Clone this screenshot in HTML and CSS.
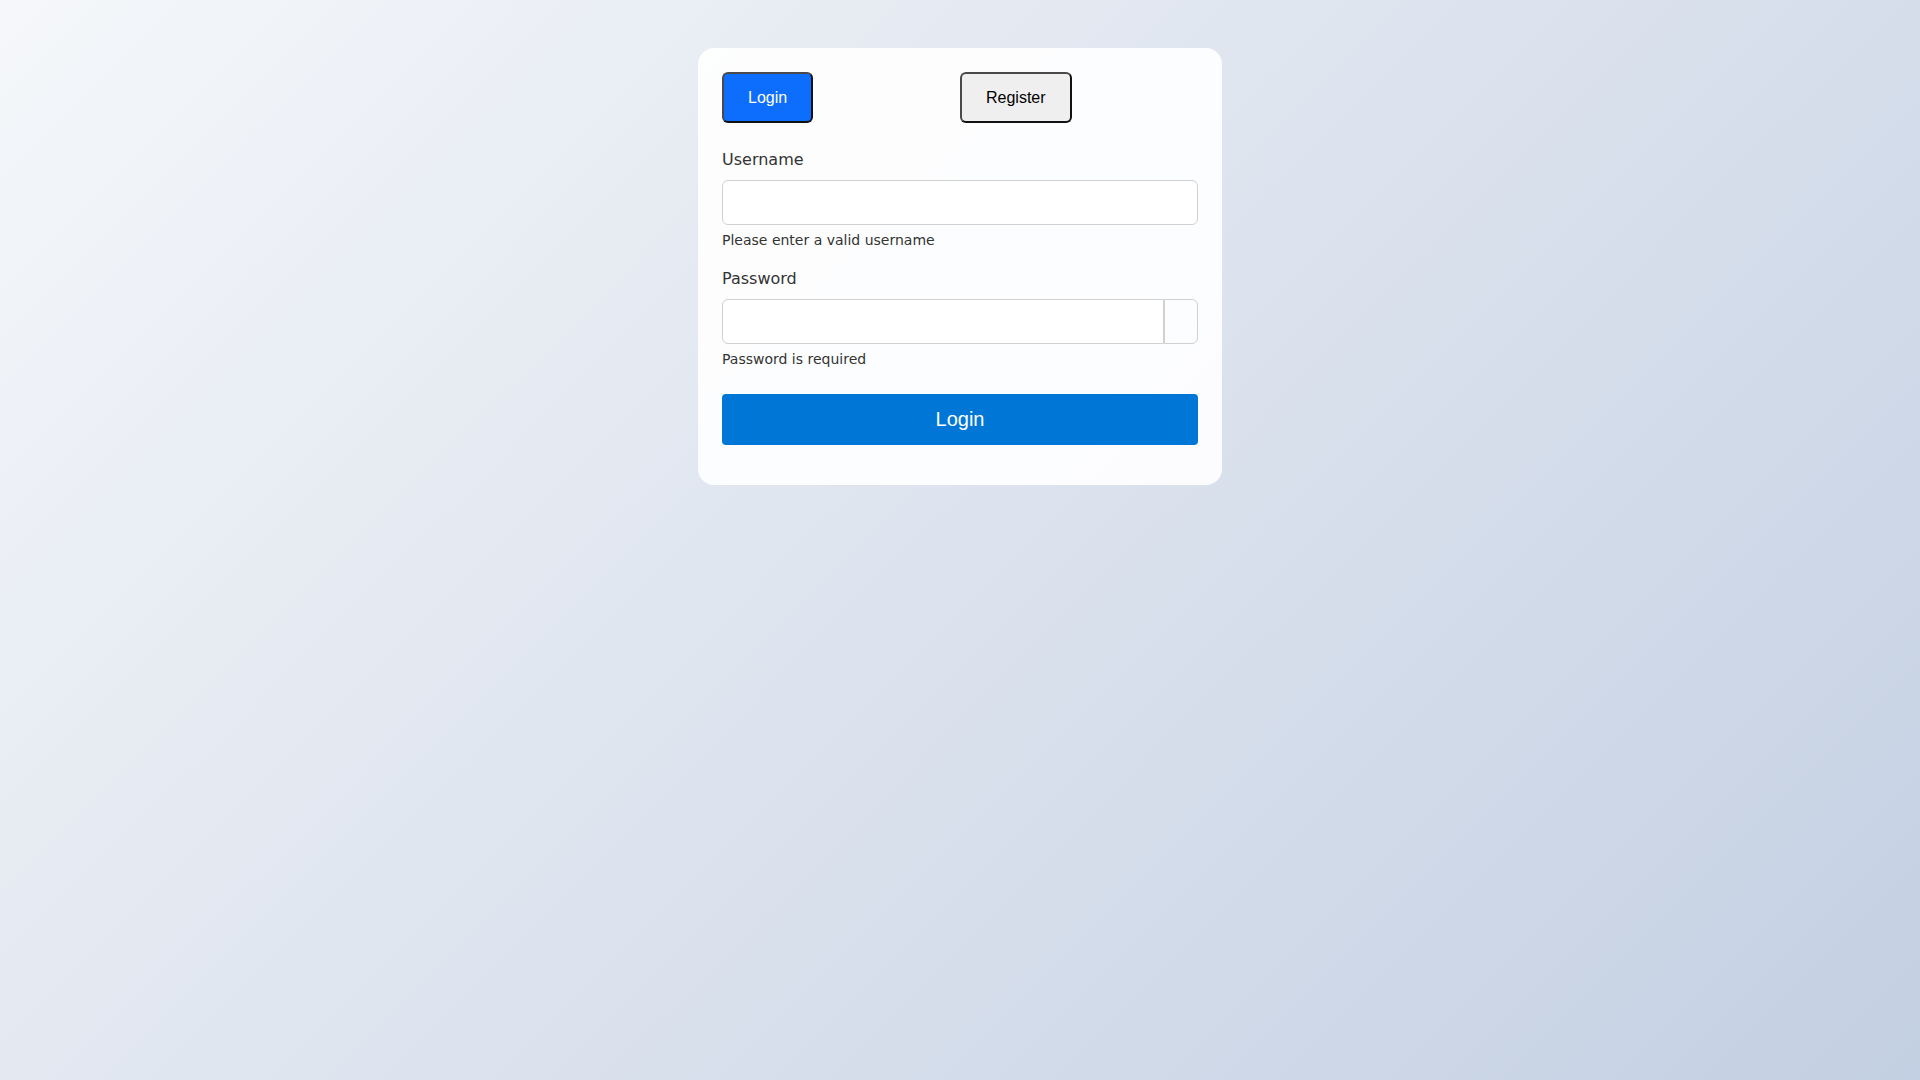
FILE: index.html
```html
<!DOCTYPE html>
<html lang="en">
<head>
  <meta charset="UTF-8" />
  <meta name="viewport" content="width=device-width, initial-scale=1.0" />
  <title>Login</title>
  <link rel="stylesheet" href="styles.css">
</head>
<body>

  <div class="page">
    <div class="card">
      <div class="tabs">
        <button class="tab tab-active" type="button">Login</button>
        <button class="tab" type="button">Register</button>
      </div>

      <form class="login-form">
        <div class="field">
          <label class="field-label" for="username">Username</label>
          <input class="field-input" type="text" id="username" />
          <div class="field-hint">Please enter a valid username</div>
        </div>

        <div class="field">
          <label class="field-label" for="password">Password</label>
          <div class="input-group">
            <input class="field-input group-input" type="password" id="password" />
            <button class="toggle-btn" type="button"></button>
          </div>
          <div class="field-hint">Password is required</div>
        </div>

        <button class="submit-btn" type="submit">Login</button>
      </form>
    </div>
  </div>

</body>
</html>
```

FILE: styles.css
```css
html, body {
  margin: 0;
  min-height: 100vh;
}

body {
  font-family: "DejaVu Sans", sans-serif;
  background: linear-gradient(135deg, #f5f7fa 0%, #c3cfe2 100%);
  color: #333;
}

.page {
  display: flex;
  justify-content: center;
  padding-top: 48px;
}

.card {
  width: 524px;
  box-sizing: border-box;
  padding: 24px;
  background: rgba(255, 255, 255, 0.9);
  border-radius: 16px;
}

.tabs {
  display: grid;
  grid-template-columns: 1fr 1fr;
  margin-bottom: 25px;
}

.tab {
  justify-self: start;
  font-family: "Liberation Sans", Arial, sans-serif;
  font-size: 16px;
  line-height: 19px;
  padding: 14px 24px;
  border: 2px solid;
  border-color: #4a4a4a #111 #111 #4a4a4a;
  border-radius: 6px;
  background-color: #efefef;
  color: #000;
  cursor: pointer;
}

.tab-active {
  background-color: #0d6efd;
  color: #fff;
}

.login-form {
  margin: 0 0 16px;
}

.field {
  margin-bottom: 16px;
}

.field-label {
  display: block;
  font-size: 16px;
  line-height: 24px;
  margin-bottom: 8px;
  color: #333;
}

.field-input {
  display: block;
  width: 100%;
  height: 45px;
  box-sizing: border-box;
  padding: 0 12px;
  font-size: 16px;
  border: 1px solid #d0d0d0;
  border-radius: 6px;
  background: #fff;
}

.field-hint {
  margin-top: 5px;
  font-size: 14px;
  line-height: 21px;
  color: #333;
}

.input-group {
  display: flex;
}

.group-input {
  flex: 1;
  border-radius: 6px 0 0 6px;
}

.toggle-btn {
  width: 34px;
  height: 45px;
  box-sizing: border-box;
  border: 1px solid #d0d0d0;
  border-radius: 0 6px 6px 0;
  background: transparent;
  cursor: pointer;
}

.submit-btn {
  display: block;
  width: 100%;
  margin-top: 24px;
  padding: 13px 0;
  font-family: "Liberation Sans", Arial, sans-serif;
  font-size: 20px;
  line-height: 25px;
  color: #fff;
  background-color: #0077d7;
  border: none;
  border-radius: 4px;
  cursor: pointer;
}
```
